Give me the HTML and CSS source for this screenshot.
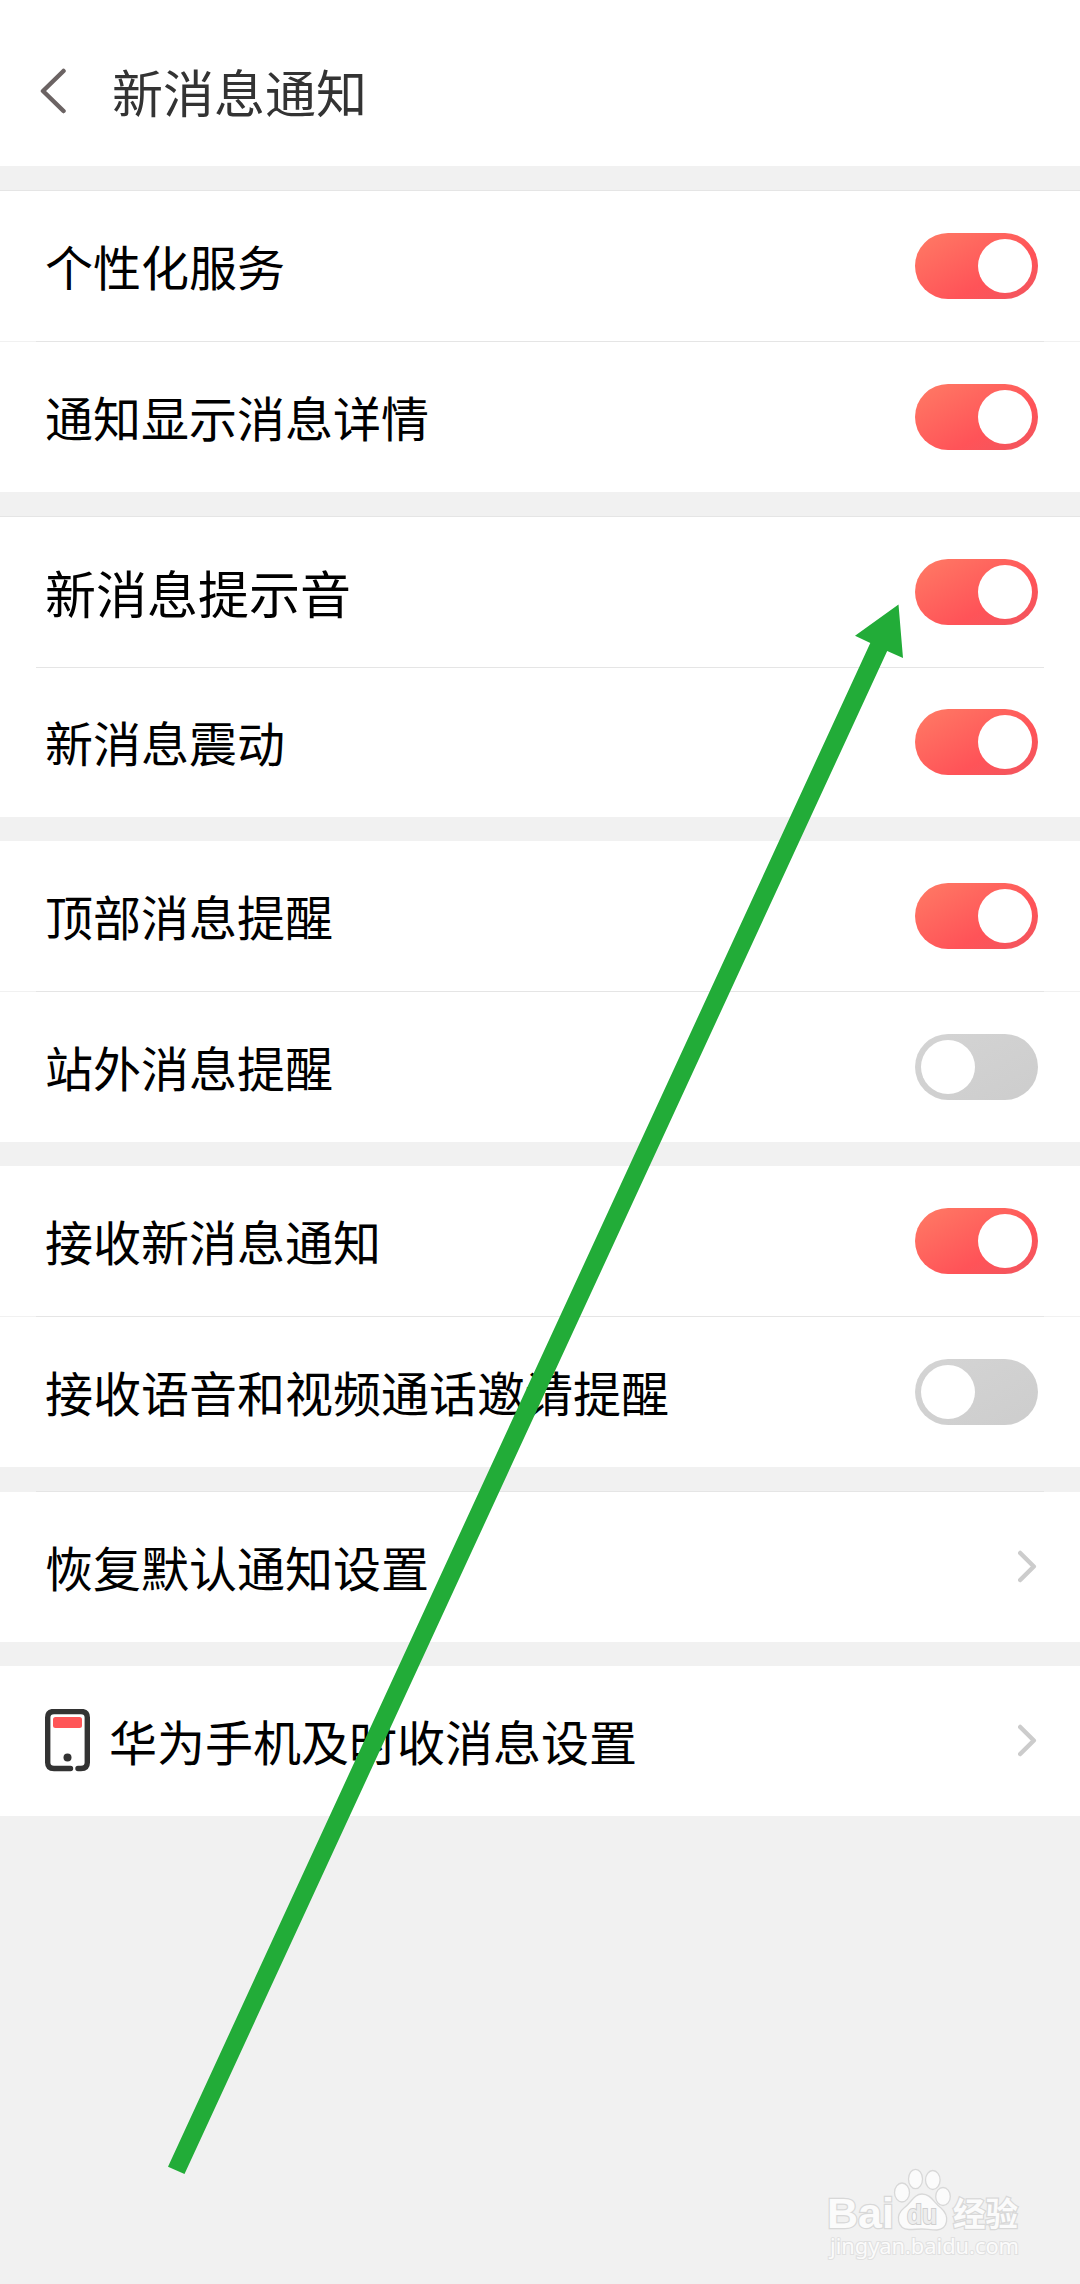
FILE: index.html
```html
<!DOCTYPE html>
<html lang="zh-CN">
  <head>
    <meta charset="UTF-8" />
    <meta name="viewport" content="width=device-width, initial-scale=1.0" />
    <title>新消息通知</title>
    <link rel="stylesheet" href="styles.css" />
  </head>
  <body>
    <header class="header">
      <svg class="back" width="28" height="48" viewBox="0 0 28 48">
        <path d="M23.5 4 L3 24 L23.5 44" />
      </svg>
      <h1>新消息通知</h1>
    </header>

    <main class="groups">
      <section class="group group-line">
        <div class="row">
          <span class="label">个性化服务</span>
          <span class="switch on"></span>
        </div>
        <div class="divider"></div>
        <div class="row">
          <span class="label">通知显示消息详情</span>
          <span class="switch on"></span>
        </div>
      </section>

      <section class="group group-line">
        <div class="row">
          <span class="label large">新消息提示音</span>
          <span class="switch on"></span>
        </div>
        <div class="divider inset"></div>
        <div class="row short">
          <span class="label">新消息震动</span>
          <span class="switch on"></span>
        </div>
      </section>

      <section class="group">
        <div class="row">
          <span class="label">顶部消息提醒</span>
          <span class="switch on"></span>
        </div>
        <div class="divider"></div>
        <div class="row">
          <span class="label">站外消息提醒</span>
          <span class="switch"></span>
        </div>
      </section>

      <section class="group">
        <div class="row">
          <span class="label">接收新消息通知</span>
          <span class="switch on"></span>
        </div>
        <div class="divider"></div>
        <div class="row">
          <span class="label">接收语音和视频通话邀请提醒</span>
          <span class="switch"></span>
        </div>
      </section>

      <section class="group">
        <div class="divider"></div>
        <div class="row">
          <span class="label">恢复默认通知设置</span>
          <svg class="chevron" width="20" height="36" viewBox="0 0 20 36">
            <path d="M2.2 4 L15.8 17.5 L2.2 31" />
          </svg>
        </div>
      </section>

      <section class="group">
        <div class="row">
          <svg class="phone" width="46" height="64" viewBox="0 0 46 64">
            <path d="M25.5 59.5 H9 Q2.7 59.5 2.7 53.5 V8.5 Q2.7 2.5 9 2.5 H36 Q42.3 2.5 42.3 8.500 V53.5 Q42.3 59.5 36 59.5 H33" />
            <rect x="8" y="8" width="29" height="11" rx="2.5" />
            <circle cx="22.5" cy="48.5" r="4" />
          </svg>
          <span class="label">华为手机及时收消息设置</span>
          <svg class="chevron" width="20" height="36" viewBox="0 0 20 36">
            <path d="M2.2 4 L15.8 17.5 L2.2 31" />
          </svg>
        </div>
      </section>
    </main>

    <svg class="arrow" width="1080" height="2284" viewBox="0 0 1080 2284">
      <polygon points="898.5,604.5 903,658 887.2,651 184.5,2174 168,2166.7 870.3,643 855,635.7" />
    </svg>

    <svg class="watermark" width="220" height="110" viewBox="0 0 220 110">
      <text class="bai" x="7" y="68" textLength="67" lengthAdjust="spacingAndGlyphs">Bai</text>
      <ellipse cx="82" cy="32.5" rx="7.5" ry="9.5" />
      <ellipse cx="95.5" cy="19" rx="7" ry="9.7" />
      <ellipse cx="112.8" cy="20" rx="7.3" ry="9.5" />
      <ellipse cx="123" cy="36.5" rx="7.3" ry="9" />
      <path d="M102 34 C94 34 91 43 84 48 C75 55 77 69 89 69.5 C95 69.5 97 69 102 69 C107 69 110 70 117 70 C128 69 130 56 121 48 C114 43 111 34 102 34 Z" />
      <text class="du" x="87" y="63.5" textLength="30" lengthAdjust="spacingAndGlyphs">du</text>
      <text class="exp" x="133" y="65.5" textLength="65" lengthAdjust="spacingAndGlyphs">经验</text>
      <text class="url" x="10" y="94" textLength="189" lengthAdjust="spacingAndGlyphs">jingyan.baidu.com</text>
    </svg>
  </body>
</html>
```

FILE: styles.css
```css
:root {
  --bg: #f1f1f1;
  --white: #ffffff;
  --line: #e5e5e5;
  --title: #333333;
  --green: #22ac38;
}
* {
  box-sizing: border-box;
}
body {
  margin: 0;
  position: relative;
  min-height: 2284px;
  background: var(--bg);
  color: #000;
  font-family: "Noto Sans CJK SC", sans-serif;
}
.header {
  display: flex;
  align-items: center;
  height: 166px;
  padding: 16px 40px 0;
  background: var(--white);
}
.header h1 {
  margin: 0 0 0 44px;
  font-size: 51px;
  font-weight: 400;
  line-height: 72px;
  color: var(--title);
}
.back path,
.chevron path {
  fill: none;
  stroke: #6b6363;
  stroke-width: 4.5;
  stroke-linecap: round;
  stroke-linejoin: round;
}
.chevron path {
  stroke: #cccccc;
}
.groups {
  display: flex;
  flex-direction: column;
  gap: 24px;
  padding-top: 24px;
}
.group {
  background: var(--white);
}
.group-line {
  border-top: 1px solid var(--line);
}
.row {
  display: flex;
  align-items: center;
  height: 150px;
  padding: 0 42px 0 45px;
}
.row.short {
  height: 149px;
  padding-bottom: 1px;
}
.label {
  flex: 1;
  padding-bottom: 3px;
  font-size: 48px;
  line-height: 72px;
}
.label.large {
  padding-bottom: 0;
  font-size: 51px;
}
/* the ends of a full-width divider are a shade lighter */
.divider {
  height: 1px;
  padding: 0 36px;
  background: var(--bg);
}
.divider.inset {
  background: var(--white);
}
.divider::before {
  content: "";
  display: block;
  height: 1px;
  background: var(--line);
}
.switch {
  width: 123px;
  height: 66px;
  padding: 6px;
  border-radius: 33px;
  background: linear-gradient(150deg, #d4d4d4, #cdcdcd);
}
.switch::before {
  content: "";
  display: block;
  width: 54px;
  height: 54px;
  border-radius: 50%;
  background: var(--white);
}
.switch.on {
  background: linear-gradient(150deg, #ff7563 10%, #ff5358 65%, #f0565f);
}
.switch.on::before {
  margin-left: auto;
}
.phone {
  margin-right: 18px;
}
.phone path {
  fill: none;
  stroke: #333333;
  stroke-width: 5.4;
  stroke-linecap: round;
}
.phone rect {
  fill: #ff5557;
}
.phone circle {
  fill: #333333;
}
.arrow {
  position: absolute;
  top: 0;
  left: 0;
  fill: var(--green);
}
.watermark {
  position: absolute;
  top: 2160px;
  left: 820px;
  overflow: visible;
  fill: #fbfbfb;
  stroke: #d8d8d8;
  stroke-width: 1.3px;
}
.watermark text {
  paint-order: stroke;
  stroke-width: 2.5px;
}
.watermark .bai {
  font: bold 43px "Liberation Sans", sans-serif;
}
.watermark .du {
  font: bold 27px "Liberation Sans", sans-serif;
  fill: #ededed;
  stroke: #cfcfcf;
  stroke-width: 2px;
}
.watermark .exp {
  font: bold 33px "Noto Sans CJK SC", sans-serif;
}
.watermark .url {
  font: 22px "Noto Sans", sans-serif;
  stroke: #e0e0e0;
  stroke-width: 2px;
}
```
